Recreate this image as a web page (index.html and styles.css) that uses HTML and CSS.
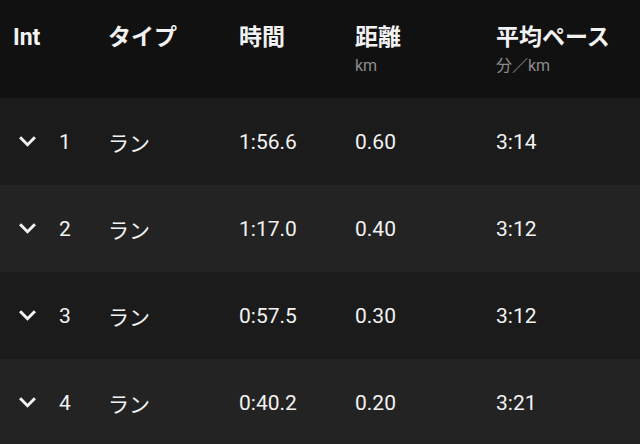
FILE: index.html
```html
<!DOCTYPE html>
<html lang="ja">
<head>
<meta charset="utf-8">
<link rel="stylesheet" href="styles.css">
</head>
<body>
<div class="table">
  <div class="head">
    <div class="hcell first"><div class="ht">Int</div></div>
    <div class="hcell"><div class="ht">タイプ</div></div>
    <div class="hcell"><div class="ht">時間</div></div>
    <div class="hcell"><div class="ht">距離</div><div class="hs">km</div></div>
    <div class="hcell"><div class="ht">平均ペース</div><div class="hs">分／km</div></div>
  </div>
  <div class="row odd">
    <div class="cell first"><svg class="chev" viewBox="0 0 16 10"><path d="M2 2 L8 8 L14 2" /></svg><span class="num">1</span></div>
    <div class="cell">ラン</div><div class="cell">1:56.6</div><div class="cell">0.60</div><div class="cell">3:14</div>
  </div>
  <div class="row even">
    <div class="cell first"><svg class="chev" viewBox="0 0 16 10"><path d="M2 2 L8 8 L14 2" /></svg><span class="num">2</span></div>
    <div class="cell">ラン</div><div class="cell">1:17.0</div><div class="cell">0.40</div><div class="cell">3:12</div>
  </div>
  <div class="row odd">
    <div class="cell first"><svg class="chev" viewBox="0 0 16 10"><path d="M2 2 L8 8 L14 2" /></svg><span class="num">3</span></div>
    <div class="cell">ラン</div><div class="cell">0:57.5</div><div class="cell">0.30</div><div class="cell">3:12</div>
  </div>
  <div class="row even">
    <div class="cell first"><svg class="chev" viewBox="0 0 16 10"><path d="M2 2 L8 8 L14 2" /></svg><span class="num">4</span></div>
    <div class="cell">ラン</div><div class="cell">0:40.2</div><div class="cell">0.20</div><div class="cell">3:21</div>
  </div>
</div>
</body>
</html>
```
FILE: styles.css
```css
html, body {
  margin: 0;
  padding: 0;
  background: #232323;
}
body {
  width: 640px;
  height: 444px;
  overflow: hidden;
  font-family: "Roboto", "Noto Sans CJK JP", sans-serif;
  color: #f2f2f2;
}
.head, .row {
  display: grid;
  grid-template-columns: 108px 131px 116px 141px 1fr;
}
.head {
  background: #111111;
  height: 98px;
  box-sizing: border-box;
  padding-top: 23px;
}
.hcell.first {
  padding-left: 13px;
}
.ht {
  font-size: 23px;
  font-weight: 700;
  line-height: 30px;
}
.hs {
  font-size: 16px;
  line-height: 20px;
  color: #8c8c8c;
  margin-top: 3px;
}
.row {
  height: 87px;
  align-items: center;
  font-size: 21px;
}
.odd { background: #1b1b1b; }
.even { background: #232323; }
.cell.first {
  display: flex;
  align-items: center;
  padding-left: 19px;
}
.chev {
  width: 17px;
  height: 11px;
  fill: none;
  stroke: #f2f2f2;
  stroke-width: 2.8;
  stroke-linecap: square;
}
.num {
  margin-left: 23px;
}
```
